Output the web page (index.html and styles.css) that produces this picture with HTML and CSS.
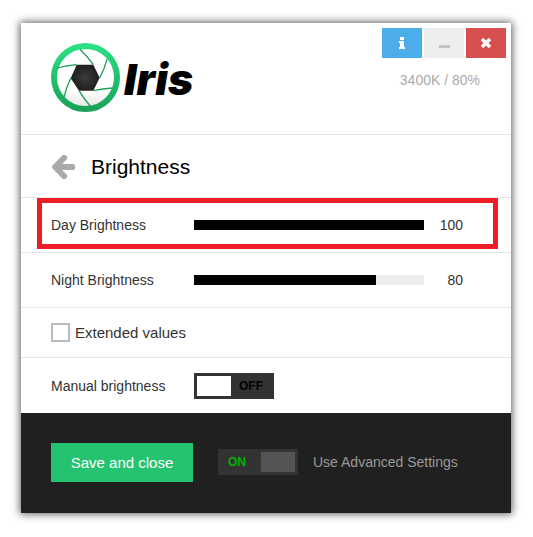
FILE: index.html
```html
<!DOCTYPE html>
<html lang="en">
<head>
  <meta charset="UTF-8">
  <meta name="viewport" content="width=device-width, initial-scale=1.0">
  <title>Iris</title>
  <link rel="stylesheet" href="styles.css">
</head>
<body>
<main class="window">
  <header class="header">
    <div class="logo">
      <svg class="logo-icon" viewBox="0 0 69 69" aria-hidden="true">
        <defs>
          <linearGradient id="ring" x1="0" y1="0" x2="0" y2="1">
            <stop offset="0" stop-color="#2be083"/>
            <stop offset="1" stop-color="#1aa35a"/>
          </linearGradient>
          <radialGradient id="hole">
            <stop offset="0" stop-color="#3c3c3c"/>
            <stop offset="1" stop-color="#1f1f1f"/>
          </radialGradient>
          <linearGradient id="lens" x1="0" y1="0" x2="0" y2="1">
            <stop offset="0.7" stop-color="#ffffff"/>
            <stop offset="1" stop-color="#e4e4e4"/>
          </linearGradient>
        </defs>
        <circle cx="34.5" cy="34.5" r="31.5" fill="url(#lens)" stroke="url(#ring)" stroke-width="6"/>
        <path d="M25.7 21.7H42.3L48.7 34.7L42.3 47.7H28L19.7 35.3Z" fill="url(#hole)"/>
        <path d="M29 6.3Q36 13 42.3 21.7M56 16.3Q53.5 26 48.7 34.7M61.3 45Q52 45.5 42.3 47.7M39.7 63.7Q33 56 28 47.7M12.7 55.3Q15 45 19.7 35.3M6.3 25Q15 22.5 25.7 21.7" fill="none" stroke="#1c9c55" stroke-width="1.3"/>
      </svg>
      <span class="logo-text">Iris</span>
    </div>
    <div class="header-side">
      <div class="window-buttons">
        <button class="win-btn info" type="button" aria-label="Info">
          <svg width="8" height="12" viewBox="0 0 8 12"><path d="M2 0h4v3H2zM1 4h5v6h1v2H1v-2h1V6H1z" fill="#fff"/></svg>
        </button>
        <button class="win-btn minimize" type="button" aria-label="Minimize">
          <svg width="12" height="12" viewBox="0 0 12 12"><path d="M1 8h11v3H1z" fill="#c3c3c3"/></svg>
        </button>
        <button class="win-btn close" type="button" aria-label="Close">
          <svg width="12" height="12" viewBox="0 0 12 12"><path d="M2 2l8 8M10 2l-8 8" stroke="#fff" stroke-width="3.4"/></svg>
        </button>
      </div>
      <p class="status">3400K / 80%</p>
    </div>
  </header>

  <div class="title-row">
    <button class="back" type="button" aria-label="Back">
      <svg width="24" height="24" viewBox="0 -40 1536 1490" preserveAspectRatio="none"><path d="M1536 640v128q0 53-32.5 90.5t-84.5 37.5h-704l293 294q38 36 38 90t-38 90l-75 76q-37 37-90 37-52 0-91-37l-651-652q-37-37-37-90 0-52 37-91l651-650q38-38 91-38 52 0 90 38l75 74q38 38 38 91t-38 91l-293 293h704q52 0 84.5 37.5t32.5 90.5z" fill="#aaa"/></svg>
    </button>
    <h1>Brightness</h1>
  </div>

  <div class="row highlighted">
    <label for="day">Day Brightness</label>
    <input class="slider" id="day" type="range" min="0" max="100" value="100" style="--fill: 100%">
    <output for="day">100</output>
  </div>

  <div class="row">
    <label for="night">Night Brightness</label>
    <input class="slider" id="night" type="range" min="0" max="100" value="80" style="--fill: 79%">
    <output for="night">80</output>
  </div>

  <div class="row check-row">
    <input class="checkbox" id="extended" type="checkbox">
    <label for="extended">Extended values</label>
  </div>

  <div class="row manual-row">
    <label for="manual">Manual brightness</label>
    <span class="switch">
      <input id="manual" type="checkbox" role="switch">
      <span class="switch-text">OFF</span>
    </span>
  </div>

  <footer class="footer">
    <button class="save" type="button">Save and close</button>
    <span class="switch switch-on">
      <input id="advanced" type="checkbox" role="switch" checked>
      <span class="switch-text">ON</span>
    </span>
    <label for="advanced">Use Advanced Settings</label>
  </footer>
</main>
</body>
</html>
```

FILE: styles.css
```css
* {
  box-sizing: border-box;
}

body {
  margin: 0;
  padding: 23px 22px 24px 21px;
  background-color: #fff;
  color: #333;
  font-family: Arial, "Liberation Sans", sans-serif;
  font-size: 14px;
}

button {
  display: flex;
  align-items: center;
  justify-content: center;
  padding: 0;
  border: none;
  font-family: inherit;
  cursor: pointer;
}

.window {
  background-color: #fff;
  box-shadow: 0 0 8px 1px rgba(0, 0, 0, 0.65);
}

.header {
  display: flex;
  justify-content: space-between;
  height: 112px;
  padding: 5px 5px 0 30px;
  border-bottom: 1px solid #e5e5e5;
}

.logo {
  display: flex;
  align-items: center;
  gap: 4px;
  height: 99px;
}

.logo-icon {
  width: 69px;
  height: 69px;
}

.logo-text {
  padding-top: 2px;
  color: #000;
  font-family: "Arial Black", Inter, sans-serif;
  font-size: 43px;
  font-style: italic;
  font-weight: 900;
  line-height: 40px;
}

.window-buttons {
  display: flex;
  gap: 2px;
}

.win-btn {
  width: 40px;
  height: 30px;
}

.info {
  background-color: #4bade9;
}

.minimize {
  background-color: #eee;
}

.close {
  background-color: #d65050;
}

.status {
  margin: 14px 26px 0 0;
  color: #aaa;
  line-height: 16px;
  text-align: right;
}

.title-row {
  display: flex;
  align-items: center;
  gap: 16px;
  height: 63px;
  padding: 2px 30px 0;
  border-bottom: 1px solid #e5e5e5;
}

.title-row h1 {
  margin: 0;
  color: #000;
  font-size: 21px;
  font-weight: normal;
}

.back {
  background: none;
}

.row {
  display: flex;
  align-items: center;
  position: relative;
  height: 55px;
  padding: 0 48px 0 30px;
  border-bottom: 1px solid #e5e5e5;
}

.row label {
  width: 143px;
}

.highlighted::after {
  content: "";
  position: absolute;
  inset: 0 13px 3px 16px;
  border: 5px solid #ee1c25;
  pointer-events: none;
}

.slider {
  appearance: none;
  flex: 1;
  min-width: 0;
  height: 10px;
  margin: 0;
  background: linear-gradient(to right, #000 var(--fill), #eee var(--fill));
}

.slider::-webkit-slider-thumb {
  appearance: none;
  width: 0;
  height: 10px;
}

.row output {
  width: 39px;
  text-align: right;
}

.check-row {
  gap: 5px;
  height: 50px;
}

.check-row label {
  width: auto;
  font-size: 15px;
}

.checkbox {
  appearance: none;
  width: 19px;
  height: 19px;
  margin: 0;
  border: 2px solid #bbb;
  background-color: #fff;
}

.manual-row {
  border-bottom: none;
}

.switch {
  display: flex;
  align-items: center;
  position: relative;
  width: 80px;
  height: 26px;
  padding: 3px;
  background-color: #333;
  color: #000;
  font-size: 12px;
  font-weight: bold;
}

.switch input {
  appearance: none;
  width: 34px;
  height: 20px;
  margin: 0;
  background-color: #fff;
}

.switch-text {
  flex: 1;
  text-align: center;
}

.switch-on {
  flex-direction: row-reverse;
  color: #00b400;
}

.switch-on input {
  background-color: #555;
}

.switch-on .switch-text {
  padding-left: 7px;
  text-align: left;
}

.footer {
  display: flex;
  align-items: center;
  height: 100px;
  padding: 0 30px 2px;
  background-color: #202020;
  color: #999;
}

.footer .switch {
  margin: 0 15px 0 25px;
}

.save {
  width: 142px;
  height: 39px;
  background-color: #24c36f;
  color: #fff;
  font-size: 15px;
}
```
